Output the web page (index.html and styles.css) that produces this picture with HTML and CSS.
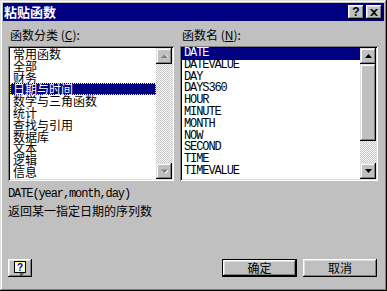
FILE: index.html
```html
<!DOCTYPE html>
<html lang="zh-CN">
<head>
    <meta charset="UTF-8">
    <title>粘贴函数</title>
    <link rel="stylesheet" href="styles.css">
</head>
<body>
    <div class="window">
        <div class="titlebar">
            <span class="title">粘贴函数</span>
            <div class="title-buttons">
                <button class="tbtn help-btn">?</button>
                <button class="tbtn">
                    <svg width="8" height="7" viewBox="0 0 8 7"><path d="M0 0h2l2 2 2-2h2L5 3.5 8 7H6L4 5 2 7H0l3-3.5z" fill="#000"/></svg>
                </button>
            </div>
        </div>

        <div class="content">
            <div class="columns">
                <div class="column left">
                    <div class="label">函数分类 (<u>C</u>):</div>
                    <div class="listbox">
                        <ul class="items cn">
                            <li>常用函数</li>
                            <li>全部</li>
                            <li>财务</li>
                            <li class="selected focus">日期与时间</li>
                            <li>数学与三角函数</li>
                            <li>统计</li>
                            <li>查找与引用</li>
                            <li>数据库</li>
                            <li>文本</li>
                            <li>逻辑</li>
                            <li>信息</li>
                        </ul>
                        <div class="scrollbar">
                            <div class="arrow">
                                <svg width="7" height="5" viewBox="0 0 7 5"><path d="M1 4h7L4.5 0.5z" fill="#fff"/><path d="M0 4h7L3.5 0.5z" fill="#808080"/></svg>
                            </div>
                            <div class="track"></div>
                            <div class="arrow">
                                <svg width="7" height="5" viewBox="0 0 7 5"><path d="M1 1h7L4.5 4.5z" fill="#fff"/><path d="M0 0.5h7L3.5 4z" fill="#808080"/></svg>
                            </div>
                        </div>
                    </div>
                </div>

                <div class="column right">
                    <div class="label">函数名 (<u>N</u>):</div>
                    <div class="listbox">
                        <ul class="items mono">
                            <li class="selected">DATE</li>
                            <li>DATEVALUE</li>
                            <li>DAY</li>
                            <li>DAYS360</li>
                            <li>HOUR</li>
                            <li>MINUTE</li>
                            <li>MONTH</li>
                            <li>NOW</li>
                            <li>SECOND</li>
                            <li>TIME</li>
                            <li>TIMEVALUE</li>
                        </ul>
                        <div class="scrollbar">
                            <div class="arrow">
                                <svg width="7" height="4" viewBox="0 0 7 4"><path d="M0 4h7L3.5 0z" fill="#000"/></svg>
                            </div>
                            <div class="thumb"></div>
                            <div class="track"></div>
                            <div class="arrow">
                                <svg width="7" height="4" viewBox="0 0 7 4"><path d="M0 0h7L3.5 4z" fill="#000"/></svg>
                            </div>
                        </div>
                    </div>
                </div>
            </div>

            <div class="syntax">DATE(year,month,day)</div>
            <div class="description">返回某一指定日期的序列数</div>

            <div class="footer">
                <button class="button help">
                    <svg width="16" height="16" viewBox="0 0 16 16">
                        <rect x="2.5" y="1.5" width="11" height="11" fill="#fff" stroke="#000"/>
                        <rect x="3.5" y="2.5" width="9" height="9" fill="none" stroke="#ffff00" stroke-dasharray="1 1"/>
                        <path d="M9 12.5v3l3-3z" fill="#fff" stroke="#000"/>
                        <text x="8" y="10.5" text-anchor="middle" font-family="Liberation Sans, sans-serif" font-weight="bold" font-size="10" fill="#000080">?</text>
                    </svg>
                </button>
                <div class="actions">
                    <button class="button default">确定</button>
                    <button class="button">取消</button>
                </div>
            </div>
        </div>
    </div>
</body>
</html>
```

FILE: styles.css
```css
* {
    box-sizing: border-box;
}

body {
    margin: 0;
    background: #c0c0c0;
    font-family: "Noto Sans CJK SC", "Liberation Sans", sans-serif;
    font-size: 12px;
    color: #000;
}

.window {
    width: 387px;
    height: 291px;
    padding: 3px;
    display: flex;
    flex-direction: column;
    background: #c0c0c0;
    box-shadow: inset -1px -1px #000, inset 1px 1px #dfdfdf,
                inset -2px -2px #808080, inset 2px 2px #fff;
}

.titlebar {
    height: 18px;
    background: #000080;
    display: flex;
    align-items: center;
    justify-content: space-between;
    padding: 0 2px 0 1px;
}

.title {
    color: #fff;
    font-weight: bold;
    font-size: 13px;
    line-height: 18px;
}

.title-buttons {
    display: flex;
    gap: 2px;
}

.tbtn {
    width: 16px;
    height: 14px;
    padding: 0;
    border: none;
    background: #c0c0c0;
    display: flex;
    align-items: center;
    justify-content: center;
    font-family: "Liberation Sans", sans-serif;
    font-weight: bold;
    font-size: 12px;
    line-height: 14px;
    box-shadow: inset -1px -1px #000, inset 1px 1px #fff,
                inset -2px -2px #808080, inset 2px 2px #dfdfdf;
}

.content {
    flex: 1;
    display: flex;
    flex-direction: column;
    padding: 6px 6px 11px 5px;
}

.columns {
    display: flex;
    gap: 6px;
}

.column.left {
    width: 166px;
}

.column.right {
    width: 198px;
}

.label {
    height: 16px;
    line-height: 16px;
    margin-bottom: 3px;
    padding-left: 2px;
}

.label u {
    text-decoration-thickness: 1px;
    text-underline-offset: 1px;
}

.listbox {
    height: 135px;
    padding: 2px;
    background: #fff;
    display: flex;
    box-shadow: inset 1px 1px #808080, inset -1px -1px #fff,
                inset 2px 2px #000, inset -2px -2px #dfdfdf;
}

.items {
    flex: 1;
    list-style: none;
    margin: 0;
    padding: 0;
}

.items li {
    height: 11.8px;
    line-height: 11.8px;
    padding-left: 3px;
    white-space: nowrap;
}

.items.mono li {
    padding-left: 2px;
}

.mono,
.syntax {
    font-family: "Liberation Mono", monospace;
    font-size: 12px;
    letter-spacing: -1.1px;
}

.items li.selected {
    background: #000080;
    color: #fff;
}

.items li.focus {
    outline: 1px dotted #ffff00;
    outline-offset: -1px;
}

.scrollbar {
    width: 16px;
    display: flex;
    flex-direction: column;
}

.arrow {
    height: 16px;
    background: #c0c0c0;
    display: flex;
    align-items: center;
    justify-content: center;
    box-shadow: inset -1px -1px #000, inset 1px 1px #dfdfdf,
                inset -2px -2px #808080, inset 2px 2px #fff;
}

.thumb {
    height: 77px;
    background: #c0c0c0;
    box-shadow: inset -1px -1px #000, inset 1px 1px #dfdfdf,
                inset -2px -2px #808080, inset 2px 2px #fff;
}

.track {
    flex: 1;
    background: repeating-conic-gradient(#fff 0 25%, #c0c0c0 0 50%);
    background-size: 2px 2px;
}

.syntax {
    margin-top: 6px;
    line-height: 14px;
}

.description {
    margin-top: 2px;
    line-height: 16px;
}

.footer {
    margin-top: auto;
    display: flex;
    justify-content: space-between;
    align-items: center;
    padding-right: 1px;
}

.actions {
    display: flex;
    gap: 6px;
}

.button {
    height: 18px;
    width: 74px;
    padding: 0;
    border: none;
    background: #c0c0c0;
    font-family: "Noto Sans CJK SC", sans-serif;
    font-size: 12px;
    line-height: 18px;
    display: flex;
    align-items: center;
    justify-content: center;
    box-shadow: inset -1px -1px #000, inset 1px 1px #fff,
                inset -2px -2px #808080, inset 2px 2px #dfdfdf;
}

.button.default {
    width: 75px;
    box-shadow: inset 0 0 0 1px #000, inset -2px -2px #000, inset 2px 2px #fff,
                inset -3px -3px #808080, inset 3px 3px #dfdfdf;
}

.button.help {
    width: 24px;
}
```
